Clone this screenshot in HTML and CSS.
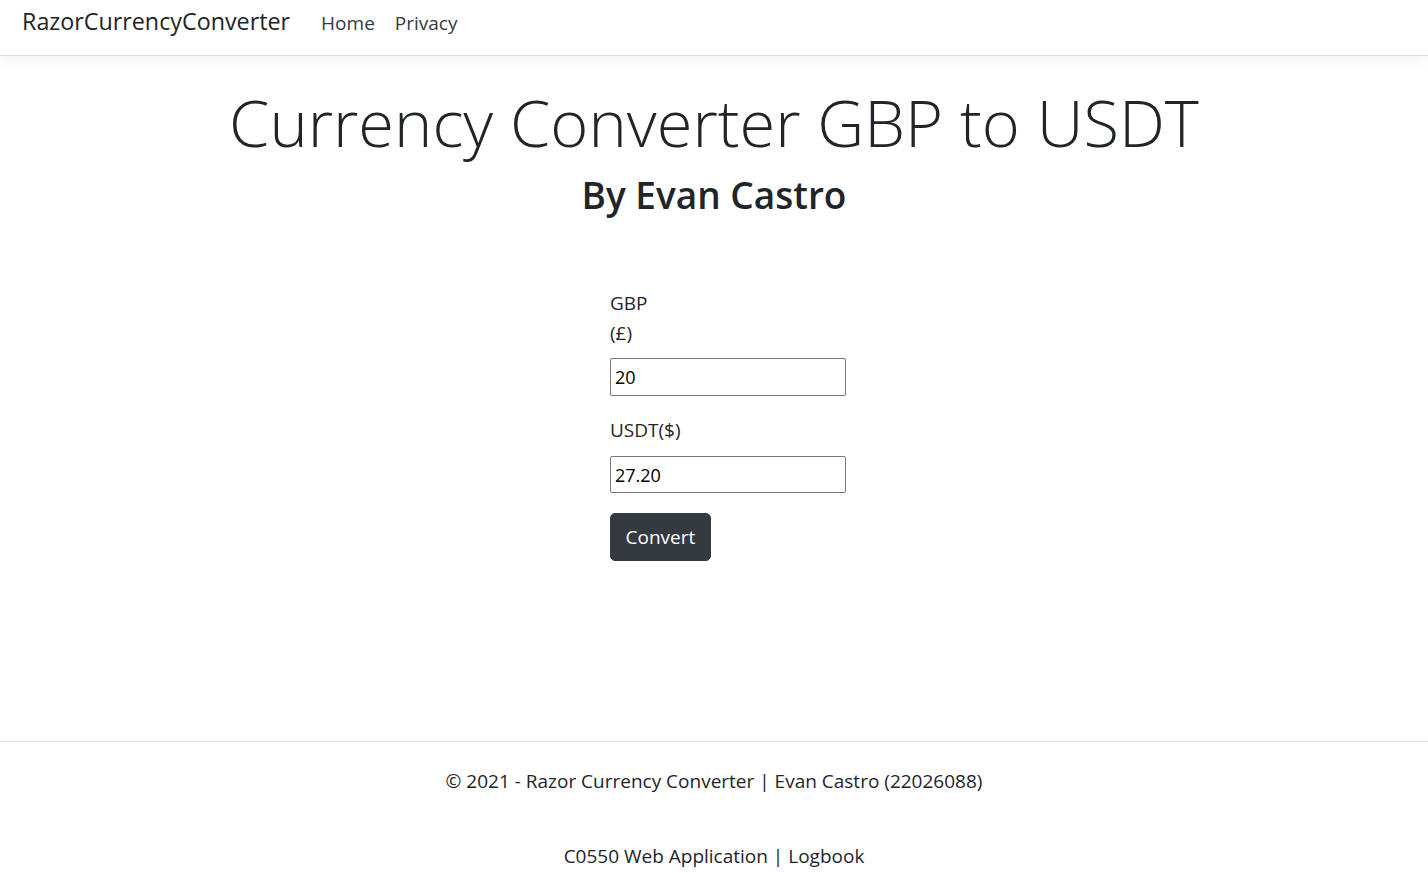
FILE: index.html
```html
<!DOCTYPE html>
<html lang="en">
<head>
<meta charset="utf-8">
<title>RazorCurrencyConverter</title>
<link rel="stylesheet" href="styles.css">
</head>
<body>
<header class="navbar">
  <a class="brand" href="#">RazorCurrencyConverter</a>
  <nav class="nav">
    <a class="nav-link" href="#">Home</a>
    <a class="nav-link" href="#">Privacy</a>
  </nav>
</header>
<main class="main">
  <h1 class="title">Currency Converter GBP to USDT</h1>
  <h2 class="subtitle">By Evan Castro</h2>
  <form class="form">
    <label class="label label-gbp" for="gbp">GBP<br>(£)</label>
    <input class="field field-gbp" id="gbp" type="text" value="20">
    <label class="label label-usdt" for="usdt">USDT($)</label>
    <input class="field field-usdt" id="usdt" type="text" value="27.20">
    <button class="btn" type="button">Convert</button>
  </form>
</main>
<footer class="footer">
  <p class="footer-line">© 2021 - Razor Currency Converter | Evan Castro (22026088)</p>
  <p class="footer-line footer-second">C0550 Web Application | Logbook</p>
</footer>
</body>
</html>
```
FILE: styles.css
```css
* { box-sizing: border-box; }
html, body { margin: 0; padding: 0; }
body {
  font-family: "Segoe UI", "Open Sans", "Noto Sans", sans-serif;
  color: #212529;
  background: #fff;
  font-size: 16px;
  width: 1428px;
  height: 873px;
  overflow: hidden;
  display: flex;
  flex-direction: column;
}
.navbar {
  height: 56px;
  flex: none;
  display: flex;
  align-items: baseline;
  padding: 6px 22px 0;
  border-bottom: 1px solid #dee2e6;
  box-shadow: 0 4px 12px rgba(0,0,0,0.05);
  background: #fff;
  position: relative;
  z-index: 1;
}
.brand {
  font-size: 23.3px;
  line-height: 30px;
  color: #212529;
  text-decoration: none;
  margin-right: 21px;
}
.nav { display: flex; align-items: baseline; }
.nav-link {
  color: #343a40;
  text-decoration: none;
  font-size: 19px;
  line-height: 30px;
  padding: 0 10px;
}
.main {
  flex: 1;
  display: flex;
  flex-direction: column;
  align-items: center;
}
.title {
  margin: 27px 0 0;
  font-size: 65px;
  font-weight: 300;
  line-height: 78px;
  color: #212529;
}
.subtitle {
  margin: 12px 0 0;
  font-size: 37px;
  font-weight: 600;
  line-height: 44px;
}
.form {
  align-self: flex-start;
  margin-left: 610px;
  margin-top: 71px;
  width: 236px;
  display: flex;
  flex-direction: column;
  align-items: flex-start;
}
.label {
  font-size: 19px;
  line-height: 30px;
  color: #212529;
}
.field {
  width: 236px;
  border: 1px solid #767676;
  border-radius: 2px;
  font-family: inherit;
  font-size: 18px;
  padding: 0 4px;
  color: #000;
  background: #fff;
}
.field-gbp { margin-top: 10px; height: 38px; }
.label-usdt { margin-top: 19px; }
.field-usdt { margin-top: 11px; height: 37px; }
.btn {
  margin-top: 20px;
  height: 48px;
  padding: 0 14.5px;
  background: #343a40;
  color: #fff;
  border: 1px solid #343a40;
  border-radius: 5px;
  font-family: inherit;
  font-size: 19px;
}
.footer {
  flex: none;
  border-top: 1px solid #dee2e6;
  height: 132px;
  text-align: center;
  padding-top: 25px;
}
.footer-line {
  margin: 0;
  font-size: 19px;
  line-height: 28px;
  color: #212529;
}
.footer-second { margin-top: 47px; }
```
